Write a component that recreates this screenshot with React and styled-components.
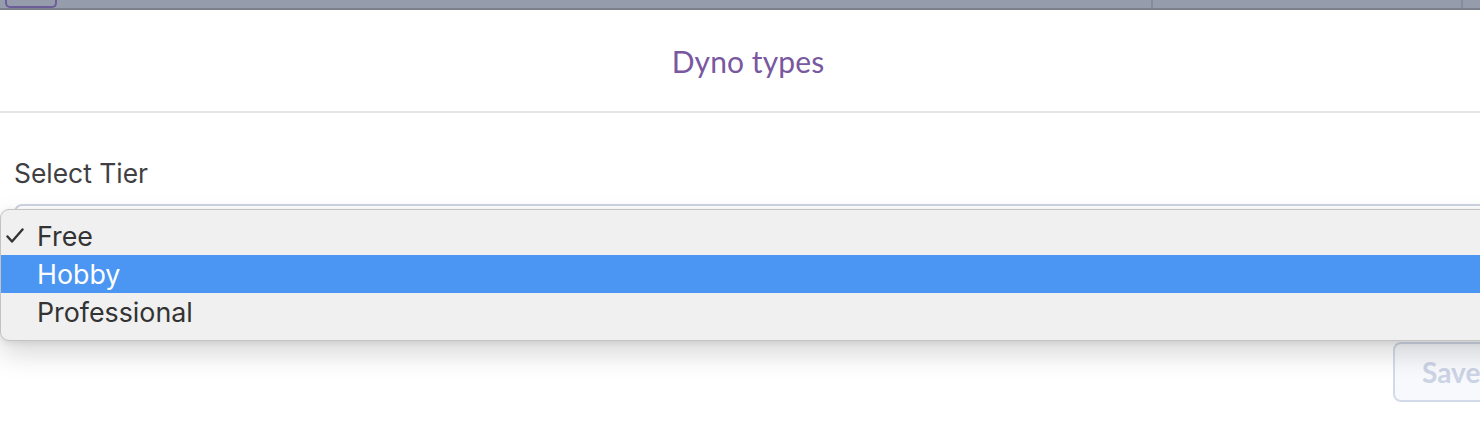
import React, { useState } from "react";
import styled, { createGlobalStyle } from "styled-components";

const Global = createGlobalStyle`
  html, body { margin: 0; padding: 0; background: #fff; overflow: hidden; }
  body { font-family: Lato, "Noto Sans", sans-serif; }
`;

const Page = styled.div`
  width: 1560px;
  height: 424px;
  position: relative;
`;

const TopBar = styled.div`
  height: 8px;
  background: #959cab;
  border-bottom: 2px solid #7b808c;
  display: flex;
  padding-left: 5px;
`;

const Tab = styled.div`
  width: ${(p) => p.$w}px;
  height: 100%;
  box-sizing: border-box;
  border-right: 2px solid #858c9c;
  ${(p) =>
    p.$active &&
    `
    border: 2px solid #6d5d98;
    border-top: none;
    border-radius: 0 0 5px 5px;
    margin-right: 317px;
  `}
`;

const Header = styled.div`
  height: 101px;
  display: flex;
  align-items: center;
  justify-content: center;
  border-bottom: 2px solid #e5e5e5;
  width: 1496px;
`;

const Title = styled.h2`
  margin: 0;
  font-weight: 400;
  font-size: 30px;
  color: #79589f;
  letter-spacing: 0.1px;
`;

const Body = styled.div`
  padding: 44px 14px 0;
`;

const Label = styled.div`
  font-family: Inter, "Liberation Sans", sans-serif;
  font-size: 26.4px;
  color: #3f3f44;
  line-height: 32px;
`;

const SelectBox = styled.div`
  margin-top: 15px;
  height: 64px;
  border: 2px solid #cdd3e0;
  border-radius: 8px;
  background: #fff;
`;

const Actions = styled.div`
  display: flex;
  justify-content: flex-end;
  margin-top: 70px;
`;

const Button = styled.button`
  width: 153px;
  height: 60px;
  border: 2px solid #d3daea;
  border-radius: 8px;
  background: #f8f9fc;
  color: #cbd3e5;
  font-family: Lato, sans-serif;
  font-weight: 700;
  font-size: 28px;
  text-align: left;
  padding-left: 27px;
`;

const Menu = styled.ul`
  position: absolute;
  top: 209px;
  left: 0;
  width: 1540px;
  margin: 0;
  padding: 7px 0 8px;
  list-style: none;
  background: #f0f0f0;
  border: 1px solid #c3c3c3;
  border-radius: 9px;
  box-shadow: 0 12px 28px rgba(0, 0, 0, 0.16), 0 2px 6px rgba(0, 0, 0, 0.08);
  box-sizing: border-box;
  height: 132px;
`;

const Option = styled.li`
  height: 38px;
  display: flex;
  align-items: center;
  position: relative;
  padding-left: 36px;
  font-family: Inter, "Liberation Sans", sans-serif;
  font-size: 26.8px;
  color: ${(p) => (p.$hover ? "#fff" : "#333")};
  background: ${(p) => (p.$hover ? "#4b96f3" : "transparent")};
`;

const Check = styled.svg`
  position: absolute;
  left: 5px;
  top: 11px;
`;

const tiers = ["Free", "Hobby", "Professional"];

const App = () => {
  const [selected] = useState("Free");
  const [hover, setHover] = useState("Hobby");

  return (
    <Page>
      <Global />
      <TopBar>
        <Tab $active $w={52} />
        <Tab $w={779} />
        <Tab $w={310} />
      </TopBar>
      <Header>
        <Title>Dyno types</Title>
      </Header>
      <Body>
        <Label>Select Tier</Label>
        <SelectBox />
        <Actions>
          <Button disabled>Save</Button>
        </Actions>
      </Body>
      <Menu>
        {tiers.map((t) => (
          <Option key={t} $hover={hover === t} onMouseEnter={() => setHover(t)}>
            {selected === t && (
              <Check width="18" height="16" viewBox="0 0 18 16">
                <path d="M1.5 8.5 L6 13.5 L16.5 1.5" fill="none" stroke="#333" strokeWidth="2.4" strokeLinecap="round" strokeLinejoin="round" />
              </Check>
            )}
            {t}
          </Option>
        ))}
      </Menu>
    </Page>
  );
};

export default App;
